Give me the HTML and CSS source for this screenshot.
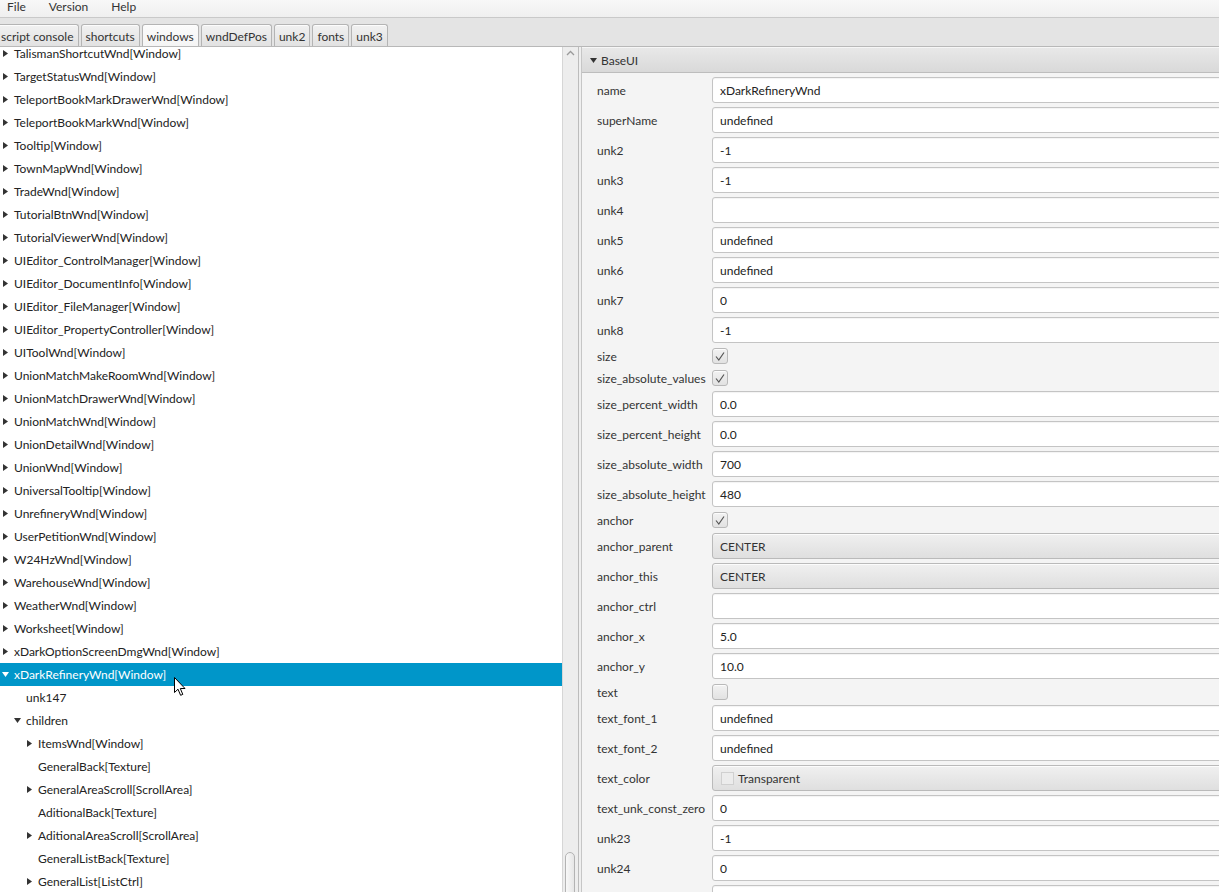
FILE: index.html
```html
<!DOCTYPE html>
<html>
<head>
<meta charset="utf-8">
<link rel="stylesheet" href="styles.css">
</head>
<body>
<div class="app">
  <div class="menubar">
    <span class="menu">File</span>
    <span class="menu">Version</span>
    <span class="menu">Help</span>
  </div>
  <div class="tabbar">
    <div class="tabs">
      <div class="tab first">script console</div>
      <div class="tab">shortcuts</div>
      <div class="tab selected">windows</div>
      <div class="tab">wndDefPos</div>
      <div class="tab">unk2</div>
      <div class="tab">fonts</div>
      <div class="tab">unk3</div>
    </div>
  </div>
  <div class="main">
    <div class="tree">
      <div class="rows">
        <div class="row l0"><span class="disc"><i class="tri-r"></i></span><span class="lbl">TalismanShortcutWnd[Window]</span></div>
        <div class="row l0"><span class="disc"><i class="tri-r"></i></span><span class="lbl">TargetStatusWnd[Window]</span></div>
        <div class="row l0"><span class="disc"><i class="tri-r"></i></span><span class="lbl">TeleportBookMarkDrawerWnd[Window]</span></div>
        <div class="row l0"><span class="disc"><i class="tri-r"></i></span><span class="lbl">TeleportBookMarkWnd[Window]</span></div>
        <div class="row l0"><span class="disc"><i class="tri-r"></i></span><span class="lbl">Tooltip[Window]</span></div>
        <div class="row l0"><span class="disc"><i class="tri-r"></i></span><span class="lbl">TownMapWnd[Window]</span></div>
        <div class="row l0"><span class="disc"><i class="tri-r"></i></span><span class="lbl">TradeWnd[Window]</span></div>
        <div class="row l0"><span class="disc"><i class="tri-r"></i></span><span class="lbl">TutorialBtnWnd[Window]</span></div>
        <div class="row l0"><span class="disc"><i class="tri-r"></i></span><span class="lbl">TutorialViewerWnd[Window]</span></div>
        <div class="row l0"><span class="disc"><i class="tri-r"></i></span><span class="lbl">UIEditor_ControlManager[Window]</span></div>
        <div class="row l0"><span class="disc"><i class="tri-r"></i></span><span class="lbl">UIEditor_DocumentInfo[Window]</span></div>
        <div class="row l0"><span class="disc"><i class="tri-r"></i></span><span class="lbl">UIEditor_FileManager[Window]</span></div>
        <div class="row l0"><span class="disc"><i class="tri-r"></i></span><span class="lbl">UIEditor_PropertyController[Window]</span></div>
        <div class="row l0"><span class="disc"><i class="tri-r"></i></span><span class="lbl">UIToolWnd[Window]</span></div>
        <div class="row l0"><span class="disc"><i class="tri-r"></i></span><span class="lbl">UnionMatchMakeRoomWnd[Window]</span></div>
        <div class="row l0"><span class="disc"><i class="tri-r"></i></span><span class="lbl">UnionMatchDrawerWnd[Window]</span></div>
        <div class="row l0"><span class="disc"><i class="tri-r"></i></span><span class="lbl">UnionMatchWnd[Window]</span></div>
        <div class="row l0"><span class="disc"><i class="tri-r"></i></span><span class="lbl">UnionDetailWnd[Window]</span></div>
        <div class="row l0"><span class="disc"><i class="tri-r"></i></span><span class="lbl">UnionWnd[Window]</span></div>
        <div class="row l0"><span class="disc"><i class="tri-r"></i></span><span class="lbl">UniversalTooltip[Window]</span></div>
        <div class="row l0"><span class="disc"><i class="tri-r"></i></span><span class="lbl">UnrefineryWnd[Window]</span></div>
        <div class="row l0"><span class="disc"><i class="tri-r"></i></span><span class="lbl">UserPetitionWnd[Window]</span></div>
        <div class="row l0"><span class="disc"><i class="tri-r"></i></span><span class="lbl">W24HzWnd[Window]</span></div>
        <div class="row l0"><span class="disc"><i class="tri-r"></i></span><span class="lbl">WarehouseWnd[Window]</span></div>
        <div class="row l0"><span class="disc"><i class="tri-r"></i></span><span class="lbl">WeatherWnd[Window]</span></div>
        <div class="row l0"><span class="disc"><i class="tri-r"></i></span><span class="lbl">Worksheet[Window]</span></div>
        <div class="row l0"><span class="disc"><i class="tri-r"></i></span><span class="lbl">xDarkOptionScreenDmgWnd[Window]</span></div>
        <div class="row l0 sel"><span class="disc"><i class="tri-d"></i></span><span class="lbl">xDarkRefineryWnd[Window]</span></div>
        <div class="row l1"><span class="disc"></span><span class="lbl">unk147</span></div>
        <div class="row l1"><span class="disc"><i class="tri-d"></i></span><span class="lbl">children</span></div>
        <div class="row l2"><span class="disc"><i class="tri-r"></i></span><span class="lbl">ItemsWnd[Window]</span></div>
        <div class="row l2"><span class="disc"></span><span class="lbl">GeneralBack[Texture]</span></div>
        <div class="row l2"><span class="disc"><i class="tri-r"></i></span><span class="lbl">GeneralAreaScroll[ScrollArea]</span></div>
        <div class="row l2"><span class="disc"></span><span class="lbl">AditionalBack[Texture]</span></div>
        <div class="row l2"><span class="disc"><i class="tri-r"></i></span><span class="lbl">AditionalAreaScroll[ScrollArea]</span></div>
        <div class="row l2"><span class="disc"></span><span class="lbl">GeneralListBack[Texture]</span></div>
        <div class="row l2"><span class="disc"><i class="tri-r"></i></span><span class="lbl">GeneralList[ListCtrl]</span></div>
      </div>
    </div>
    <div class="vscroll">
      <svg class="inc" width="9" height="6" viewBox="0 0 9 6"><polyline points="1,5 4.5,1.5 8,5" fill="none" stroke="#9a9a9a" stroke-width="1.3"/></svg>
      <div class="thumb"></div>
    </div>
    <div class="divider"></div>
    <div class="right">
      <div class="titled">
        <div class="tp-header"><i class="tp-arrow"></i><span>BaseUI</span></div>
        <div class="tp-content">
          <div class="grid">
            <div class="lab">name</div><div class="tf">xDarkRefineryWnd</div>
            <div class="lab">superName</div><div class="tf">undefined</div>
            <div class="lab">unk2</div><div class="tf">-1</div>
            <div class="lab">unk3</div><div class="tf">-1</div>
            <div class="lab">unk4</div><div class="tf"></div>
            <div class="lab">unk5</div><div class="tf">undefined</div>
            <div class="lab">unk6</div><div class="tf">undefined</div>
            <div class="lab">unk7</div><div class="tf">0</div>
            <div class="lab">unk8</div><div class="tf">-1</div>
            <div class="lab">size</div><div class="cbcell"><span class="cb checked"><svg width="12" height="11" viewBox="0 0 12 11"><polyline points="2,5.5 4.8,9 10,1.5" fill="none" stroke="#555" stroke-width="1.2"/></svg></span></div>
            <div class="lab">size_absolute_values</div><div class="cbcell"><span class="cb checked"><svg width="12" height="11" viewBox="0 0 12 11"><polyline points="2,5.5 4.8,9 10,1.5" fill="none" stroke="#555" stroke-width="1.2"/></svg></span></div>
            <div class="lab">size_percent_width</div><div class="tf">0.0</div>
            <div class="lab">size_percent_height</div><div class="tf">0.0</div>
            <div class="lab">size_absolute_width</div><div class="tf">700</div>
            <div class="lab">size_absolute_height</div><div class="tf">480</div>
            <div class="lab">anchor</div><div class="cbcell"><span class="cb checked"><svg width="12" height="11" viewBox="0 0 12 11"><polyline points="2,5.5 4.8,9 10,1.5" fill="none" stroke="#555" stroke-width="1.2"/></svg></span></div>
            <div class="lab">anchor_parent</div><div class="combo">CENTER</div>
            <div class="lab">anchor_this</div><div class="combo">CENTER</div>
            <div class="lab">anchor_ctrl</div><div class="tf"></div>
            <div class="lab">anchor_x</div><div class="tf">5.0</div>
            <div class="lab">anchor_y</div><div class="tf">10.0</div>
            <div class="lab">text</div><div class="cbcell"><span class="cb"></span></div>
            <div class="lab">text_font_1</div><div class="tf">undefined</div>
            <div class="lab">text_font_2</div><div class="tf">undefined</div>
            <div class="lab">text_color</div><div class="combo color"><span class="swatch"></span>Transparent</div>
            <div class="lab">text_unk_const_zero</div><div class="tf">0</div>
            <div class="lab">unk23</div><div class="tf">-1</div>
            <div class="lab">unk24</div><div class="tf">0</div>
            <div class="lab"></div><div class="tf"></div>
          </div>
        </div>
      </div>
    </div>
  </div>
  <svg class="cursor" width="13" height="20" viewBox="0 0 13 20"><path d="M0.5,0.5 L0.5,15.5 L4,12.2 L6.6,18.3 L8.8,17.4 L6.3,11.5 L11,11.5 Z" fill="#fff" stroke="#000" stroke-width="1" stroke-linejoin="miter"/></svg>
</div>
</body>
</html>
```

FILE: styles.css
```css
* { box-sizing: border-box; }
html, body {
  margin: 0;
  padding: 0;
  width: 1219px;
  height: 892px;
  overflow: hidden;
}
body {
  font-family: "Lato", "Open Sans", sans-serif;
  font-size: 12px;
  color: #333;
  background: #f4f4f4;
}
.app {
  position: relative;
  display: flex;
  flex-direction: column;
  width: 1219px;
  height: 892px;
}
.menubar {
  height: 18px;
  flex: none;
  display: flex;
  align-items: flex-end;
  gap: 23px;
  padding-left: 7px;
  padding-bottom: 4px;
  background: linear-gradient(#f8f8f8, #efefef);
  border-bottom: 1px solid #c9c9c9;
  line-height: 12px;
  overflow: hidden;
}
.menu { color: #333; }
.tabbar {
  height: 29px;
  flex: none;
  background: #e4e4e4;
  border-bottom: 1px solid #b8b8b8;
  display: flex;
  align-items: flex-end;
  overflow: hidden;
}
.tabs {
  display: flex;
  gap: 2px;
  margin-left: -6px;
  height: 23px;
  margin-bottom: -1px;
}
.tab {
  height: 23px;
  padding: 0 4px;
  display: flex;
  align-items: center;
  border: 1px solid #b4b4b4;
  border-bottom: none;
  border-radius: 3px 3px 0 0;
  background: linear-gradient(#f1f1f1, #e1e1e1);
  box-shadow: inset 0 1px 0 rgba(255,255,255,0.8);
  color: #333;
  white-space: nowrap;
}
.tab.first { padding-left: 6px; }
.tab.selected {
  background: linear-gradient(#fbfbfb, #f4f4f4);
  height: 24px;
}
.main {
  flex: 1;
  display: flex;
  min-height: 0;
}
.tree {
  width: 562px;
  flex: none;
  background: #fff;
  overflow: hidden;
}
.rows { margin-top: -5px; }
.row {
  height: 23px;
  display: flex;
  align-items: center;
  white-space: nowrap;
  color: #222;
}
.row.l1 { padding-left: 12px; }
.row.l2 { padding-left: 24px; }
.row.sel { background: #0096c9; color: #fff; }
.disc {
  width: 14px;
  flex: none;
  display: flex;
  align-items: center;
  height: 100%;
}
.tri-r {
  display: block;
  margin-left: 3px;
  width: 5px;
  height: 7px;
  background: #333;
  clip-path: polygon(0 0, 100% 50%, 0 100%);
}
.tri-d {
  display: block;
  margin-left: 2px;
  width: 7px;
  height: 5px;
  background: #333;
  clip-path: polygon(0 0, 100% 0, 50% 100%);
}
.sel .tri-d, .sel .tri-r { background: #fff; }
.vscroll {
  position: relative;
  width: 16px;
  flex: none;
  background: #ededed;
  border-left: 1px solid #d6d6d6;
  overflow: hidden;
}
.inc { display: block; margin: 3px 0 0 3px; }
.thumb {
  position: absolute;
  left: 2px;
  width: 10px;
  top: 805px;
  height: 60px;
  border: 1px solid #b3b3b3;
  border-radius: 5px;
  background: linear-gradient(to right, #f8f8f8, #e6e6e6);
}
.divider {
  width: 3px;
  flex: none;
  border-left: 1px solid #bcbcbc;
  background: #efefef;
}
.right {
  flex: 1;
  overflow: hidden;
  background: #f4f4f4;
}
.titled {
  width: 900px;
  border-left: 1px solid #c6c6c6;
}
.tp-header {
  height: 26px;
  display: flex;
  align-items: center;
  padding-left: 8px;
  background: linear-gradient(#e8e8e8, #d9d9d9);
  border-top: 1px solid #f6f6f6;
  border-bottom: 1px solid #bdbdbd;
  color: #333;
}
.tp-arrow {
  display: block;
  width: 7px;
  height: 5px;
  background: #333;
  clip-path: polygon(0 0, 100% 0, 50% 100%);
  margin-right: 4px;
  margin-top: 1px;
}
.tp-content {
  padding: 4px 0 0 15px;
  background: #f4f4f4;
}
.grid {
  display: grid;
  grid-template-columns: 115px 700px;
  row-gap: 4px;
  align-items: center;
}
.lab {
  white-space: nowrap;
  color: #333;
}
.tf {
  height: 26px;
  display: flex;
  align-items: center;
  padding-left: 7px;
  background: #fff;
  border: 1px solid #c4c4c4;
  border-radius: 3px;
  box-shadow: inset 0 1px 1px rgba(0,0,0,0.05);
  color: #222;
}
.cbcell {
  height: 18px;
  display: flex;
  align-items: center;
}
.cb {
  width: 16px;
  height: 16px;
  display: flex;
  align-items: center;
  justify-content: center;
  border: 1px solid #b9b9b9;
  border-radius: 3px;
  background: linear-gradient(#f2f2f2, #e2e2e2);
  box-shadow: inset 0 1px 0 rgba(255,255,255,0.8);
}
.combo {
  height: 26px;
  display: flex;
  align-items: center;
  padding-left: 7px;
  border: 1px solid #bababa;
  border-radius: 3px;
  background: linear-gradient(#f0f0f0, #dfdfdf);
  box-shadow: inset 0 1px 0 rgba(255,255,255,0.8);
  color: #333;
}
.combo.color { padding-left: 8px; }
.swatch {
  width: 13px;
  height: 13px;
  border: 1px solid #d0d0d0;
  background: #ececec;
  margin-right: 4px;
}
.cursor {
  position: absolute;
  left: 174px;
  top: 677px;
}
```
